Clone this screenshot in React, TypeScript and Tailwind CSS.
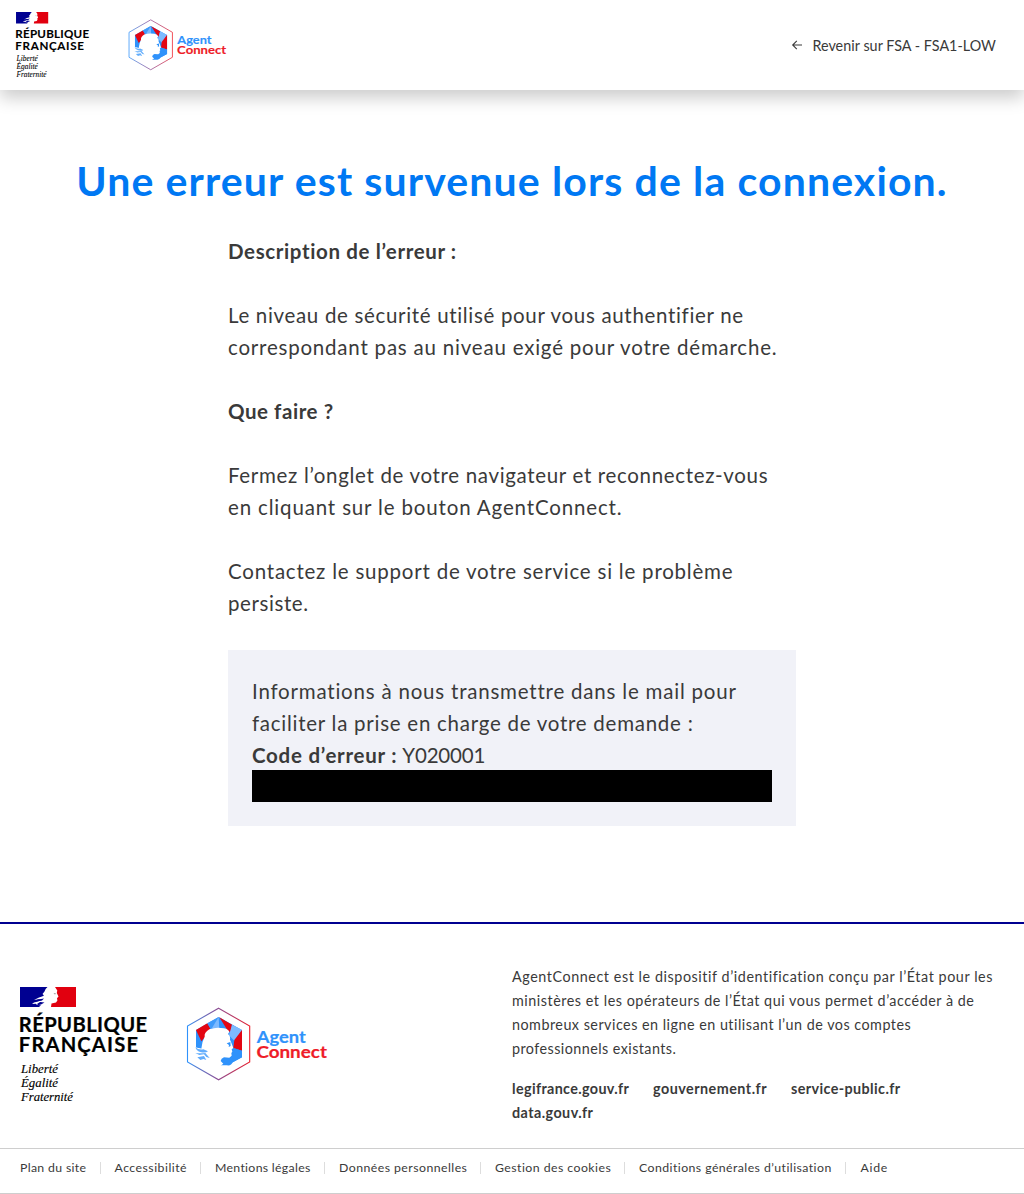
import React from 'react';

function RepubliqueLogo({ className }: { className: string }) {
  return (
    <svg viewBox="0 0 128 118" className={className} role="img" aria-label="République Française">
      <path d="M0 0H56V20H0Z" fill="#fff" />
      <path d="M0 0H27.5Q25 2 24.5 4.5L22.5 7L24 8.5L22 9.6L19 10.5L14 13L19 12.2L22 13L18 14.5L14 15.6L12 17L16 16.8L17 18L21 18.2L19 20H0Z" fill="#000091" />
      <path d="M35 0H56V20H31L31.5 16.4L36 15.6L37.4 13.5L37 11.2L38.5 9.5L36.8 6L37.3 3.5Z" fill="#e1000f" />
      <path d="M12.5 14.5L18 12.6L24 11.5L22 13.5L17 14.2ZM17 17L20 15L24.5 15.5L21 17.5L18 18.2Z" fill="#000091" />
      <path d="M33.5 6.2L36 6.6L35 7.6Z" fill="#777" />
      <g className="font-['Lato'] font-bold" fontSize="20.2" fill="#000" stroke="#000" strokeWidth="0.2">
        <text x="-1.2" y="44.9" textLength="128.4" lengthAdjust="spacing">RÉPUBLIQUE</text>
        <text x="-1.2" y="65.3" textLength="119.2" lengthAdjust="spacing">FRANÇAISE</text>
      </g>
      <g className="font-['Liberation_Serif'] italic" fontSize="13.2" fill="#000" stroke="#000" strokeWidth="0.15">
        <text x="1" y="86" textLength="37" lengthAdjust="spacingAndGlyphs">Liberté</text>
        <text x="1" y="100" textLength="37" lengthAdjust="spacingAndGlyphs">Égalité</text>
        <text x="1" y="114" textLength="52" lengthAdjust="spacingAndGlyphs">Fraternité</text>
      </g>
    </svg>
  );
}

function AgentConnectLogo({ className, id }: { className: string; id: string }) {
  return (
    <svg viewBox="0 0 142 74" className={className} role="img" aria-label="AgentConnect">
      <defs>
        <linearGradient id={id} x1="0" x2="1" y1="0" y2="0">
          <stop offset="0" stopColor="#2f92fb" />
          <stop offset="0.1" stopColor="#4b83dc" />
          <stop offset="0.5" stopColor="#8f4d92" />
          <stop offset="0.95" stopColor="#dd2338" />
          <stop offset="1" stopColor="#ee1c28" />
        </linearGradient>
      </defs>
      <path d="M32.6 1.2L63.7 19.1V54.9L32.6 72.8L1.5 54.9V19.1Z" fill="#fff" stroke={`url(#${id})`} strokeWidth="1.1" />
      <g transform="translate(-6 -5) scale(.33333)">
        <path d="M116 45L186 84V166L158 181Q154 192 141 190L122 190L64 140L48 138V84Z" fill="#2f92fb" />
        <path d="M48 84L82 64L94 84L64 118Z" fill="#e30613" />
        <path d="M82 64L116 45L100 82L92 82Z" fill="#3f9bfb" />
        <path d="M116 45L96 78L118 82Z" fill="#7dbaff" />
        <path d="M118 46L156 68L152 92L142 84Z" fill="#e30613" />
        <path d="M156 68L186 84L164 118L147 100Z" fill="#7dbaff" />
        <path d="M186 84V146L160 138L163 114Z" fill="#e30613" />
        <path d="M160 138L186 146V166L156 182Z" fill="#2f92fb" />
        <path d="M40 134L64 140Q66 118 74 104Q72 92 88 82Q108 74 132 79Q146 82 148 90L144 96Q152 103 150 113L154 122L160 138L155 142L157 149L154 153L155 161L148 167L132 166Q123 170 122 177L130 185L118 194L88 198L40 170Z" fill="#fff" />
        <path d="M140 124L151 120L152 132L146 135L147 129Z" fill="#2f92fb" />
        <path d="M46 136Q56 145 70 142L84 148Q76 154 61 150Q51 149 46 136ZM46 153Q61 155 76 153L89 168L79 165L72 157L58 159ZM52 166L72 162L79 174L70 171L61 174Z" fill="#62adfc" />
      </g>
      <g className="font-['Lato'] font-bold" fontSize="17.2">
        <text x="70.8" y="36.2" textLength="49" lengthAdjust="spacingAndGlyphs" fill="#2f92fb" stroke="#2f92fb" strokeWidth="0.2">Agent</text>
        <text x="70.4" y="50.6" textLength="70.5" lengthAdjust="spacingAndGlyphs" fill="#ee1c28" stroke="#ee1c28" strokeWidth="0.2">Connect</text>
      </g>
    </svg>
  );
}

function Separator() {
  return <span className="mt-[6px] h-3 w-px shrink-0 bg-[#ddd]" />;
}

export default function App() {
  return (
    <div className="flex h-[1194px] w-[1024px] flex-col overflow-hidden bg-white font-['Lato',sans-serif] text-[#3a3a3a]">
      <header className="flex h-[90px] shrink-0 items-start justify-between pl-4 pr-7 shadow-[0_8px_16px_rgba(0,0,0,0.2)]">
        <div className="flex">
          <RepubliqueLogo className="mt-3 h-[67.8px] w-[73.6px] overflow-visible" />
          <AgentConnectLogo id="hexagon-small" className="ml-[38.4px] mt-[19px] h-[51.6px] w-[99px] overflow-visible" />
        </div>
        <a className="mt-[34px] flex text-[14.35px] leading-6 tracking-[0.03px]">
          <svg viewBox="0 0 12 12" className="mr-[9px] mt-[5px] size-3" fill="none" stroke="#3a3a3a" strokeWidth="1.1">
            <path d="M11 6H1.7M5.8 1.9L1.7 6L5.8 10.1" />
          </svg>
          <span>Revenir sur FSA - FSA1-LOW</span>
        </a>
      </header>

      <main className="flex h-[832px] shrink-0 flex-col items-center">
        <h1 className="mt-[67px] whitespace-nowrap text-[41px] font-bold leading-[48px] tracking-[1.13px] text-[#0078f3]">
          Une erreur est survenue lors de la connexion.
        </h1>
        <div className="mt-[30px] w-[568px] whitespace-nowrap text-[20.5px] leading-8">
          <p className="font-bold tracking-[0.62px]">Description de l’erreur :</p>
          <p className="mt-8">
            <span className="block tracking-[0.67px]">Le niveau de sécurité utilisé pour vous authentifier ne</span>
            <span className="block tracking-[0.79px]">correspondant pas au niveau exigé pour votre démarche.</span>
          </p>
          <p className="mt-8 font-bold tracking-[0.55px]">Que faire ?</p>
          <p className="mt-8">
            <span className="block tracking-[0.67px]">Fermez l’onglet de votre navigateur et reconnectez-vous</span>
            <span className="block tracking-[0.84px]">en cliquant sur le bouton AgentConnect.</span>
          </p>
          <p className="mt-8">
            <span className="block tracking-[0.78px]">Contactez le support de votre service si le problème</span>
            <span className="block tracking-[0.59px]">persiste.</span>
          </p>
          <div className="mt-[31px] h-44 bg-[#f1f2f8] px-6 pt-[25px]">
            <p>
              <span className="block tracking-[0.79px]">Informations à nous transmettre dans le mail pour</span>
              <span className="block tracking-[0.74px]">faciliter la prise en charge de votre demande :</span>
              <span className="flex">
                <b className="mr-[5px] font-bold tracking-[0.75px]">Code d’erreur :</b>
                <span className="tracking-[-0.2px]">Y020001</span>
              </span>
            </p>
            <div className="-mt-px h-8 bg-black" />
          </div>
        </div>
      </main>

      <footer className="flex h-[272px] shrink-0 flex-col border-t-2 border-[#000091]">
        <div className="flex h-56 shrink-0">
          <div className="flex w-[512px] items-start pl-5">
            <RepubliqueLogo className="mt-[63px] h-[118px] w-32 overflow-visible" />
            <AgentConnectLogo id="hexagon-large" className="ml-[38px] mt-[83px] h-[74px] w-[142px] overflow-visible" />
          </div>
          <div className="mt-[41px] whitespace-nowrap text-[14.35px] leading-6">
            <p>
              <span className="block tracking-[0.56px]">AgentConnect est le dispositif d’identification conçu par l’État pour les</span>
              <span className="block tracking-[0.53px]">ministères et les opérateurs de l’État qui vous permet d’accéder à de</span>
              <span className="block tracking-[0.485px]">nombreux services en ligne en utilisant l’un de vos comptes</span>
              <span className="block tracking-[0.44px]">professionnels existants.</span>
            </p>
            <ul className="mt-4 flex w-[480px] flex-wrap font-bold">
              <li className="w-[141px] tracking-[0.36px]">legifrance.gouv.fr</li>
              <li className="w-[138px] tracking-[0.48px]">gouvernement.fr</li>
              <li className="w-[190px] tracking-[0.4px]">service-public.fr</li>
              <li className="tracking-[0.44px]">data.gouv.fr</li>
            </ul>
          </div>
        </div>
        <nav className="flex h-[46px] shrink-0 whitespace-nowrap border-y border-[#cecece] pl-5 pt-[7px] text-[12.3px] leading-6">
          <a className="w-20 tracking-[0.327px]">Plan du site</a>
          <Separator />
          <a className="ml-[13.5px] w-[85.5px] tracking-[0.475px]">Accessibilité</a>
          <Separator />
          <a className="ml-[14px] w-[109px] tracking-[0.3px]">Mentions légales</a>
          <Separator />
          <a className="ml-[14px] w-[141px] tracking-[0.45px]">Données personnelles</a>
          <Separator />
          <a className="ml-[14px] w-[129px] tracking-[0.45px]">Gestion des cookies</a>
          <Separator />
          <a className="ml-[14px] w-[206px] tracking-[0.43px]">Conditions générales d’utilisation</a>
          <Separator />
          <a className="ml-[14.5px] tracking-[0.7px]">Aide</a>
        </nav>
      </footer>
    </div>
  );
}
